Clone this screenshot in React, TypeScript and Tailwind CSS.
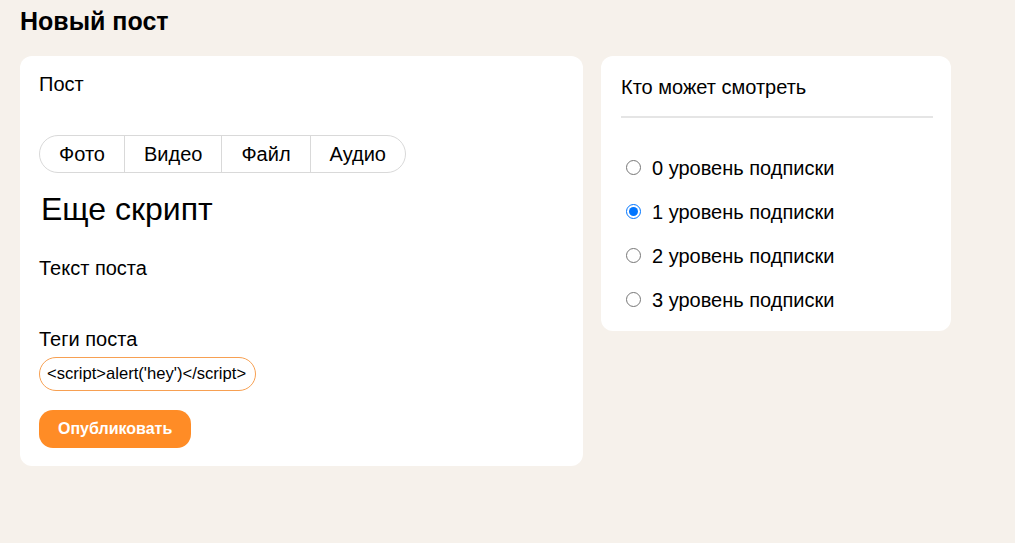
import React, { useState } from 'react';

const levels = ['0 уровень подписки', '1 уровень подписки', '2 уровень подписки', '3 уровень подписки'];
const tabs = ['Фото', 'Видео', 'Файл', 'Аудио'];

const App: React.FC = () => {
  const [level, setLevel] = useState(1);

  return (
    <div className="min-h-screen bg-[#f6f1eb] px-5 pt-[6px] font-['Liberation_Sans',Arial,sans-serif] text-black">
      <h1 className="text-[25px] font-bold leading-[30px]">Новый пост</h1>

      <div className="mt-[20px] flex items-start gap-[18px]">
        {/* левая карточка */}
        <div className="w-[563px] rounded-xl bg-white px-[19px] pt-[17px] pb-[18px]">
          <div className="text-[20px] leading-[23px]">Пост</div>

          <div className="mt-[39px] inline-flex h-[38px] overflow-hidden rounded-full border border-[#d9d9d9]">
            {tabs.map((t, i) => (
              <button
                key={t}
                className={`flex items-center px-[19px] text-[20px] ${i > 0 ? 'border-l border-[#d9d9d9]' : ''}`}
              >
                {t}
              </button>
            ))}
          </div>

          <div className="mt-[16px] pl-[2px] text-[32px] leading-[40px]">Еще скрипт</div>

          <div className="mt-[28px] text-[20px] leading-[23px]">Текст поста</div>

          <div className="mt-[48px] text-[20px] leading-[23px]">Теги поста</div>
          <input
            className="mt-[6px] block h-[34px] w-[217px] rounded-full border border-[#f7a052] pl-[7px] pr-[4px] text-[16.6px] outline-none"
            defaultValue="<script>alert('hey')</script>"
          />

          <button className="mt-[19px] h-[38px] rounded-[14px] bg-[#ff8c26] px-[19px] text-[16px] font-bold text-white">
            Опубликовать
          </button>
        </div>

        {/* правая карточка */}
        <div className="w-[350px] rounded-xl bg-white pl-5 pr-[18px] pt-[20px] pb-[20px]">
          <div className="text-[20px] leading-[23px]">Кто может смотреть</div>
          <div className="mt-[17px] h-[2px] bg-[#e5e5e5]" />
          <div className="mt-[38px] flex flex-col gap-[21px]">
            {levels.map((l, i) => (
              <label key={l} className="flex h-[23px] items-center text-[20px]">
                <input
                  type="radio"
                  name="level"
                  checked={level === i}
                  onChange={() => setLevel(i)}
                  className="ml-[5px] mr-[11px] h-[15px] w-[15px] accent-[#0075ff]"
                />
                {l}
              </label>
            ))}
          </div>
        </div>
      </div>
    </div>
  );
};

export default App;
